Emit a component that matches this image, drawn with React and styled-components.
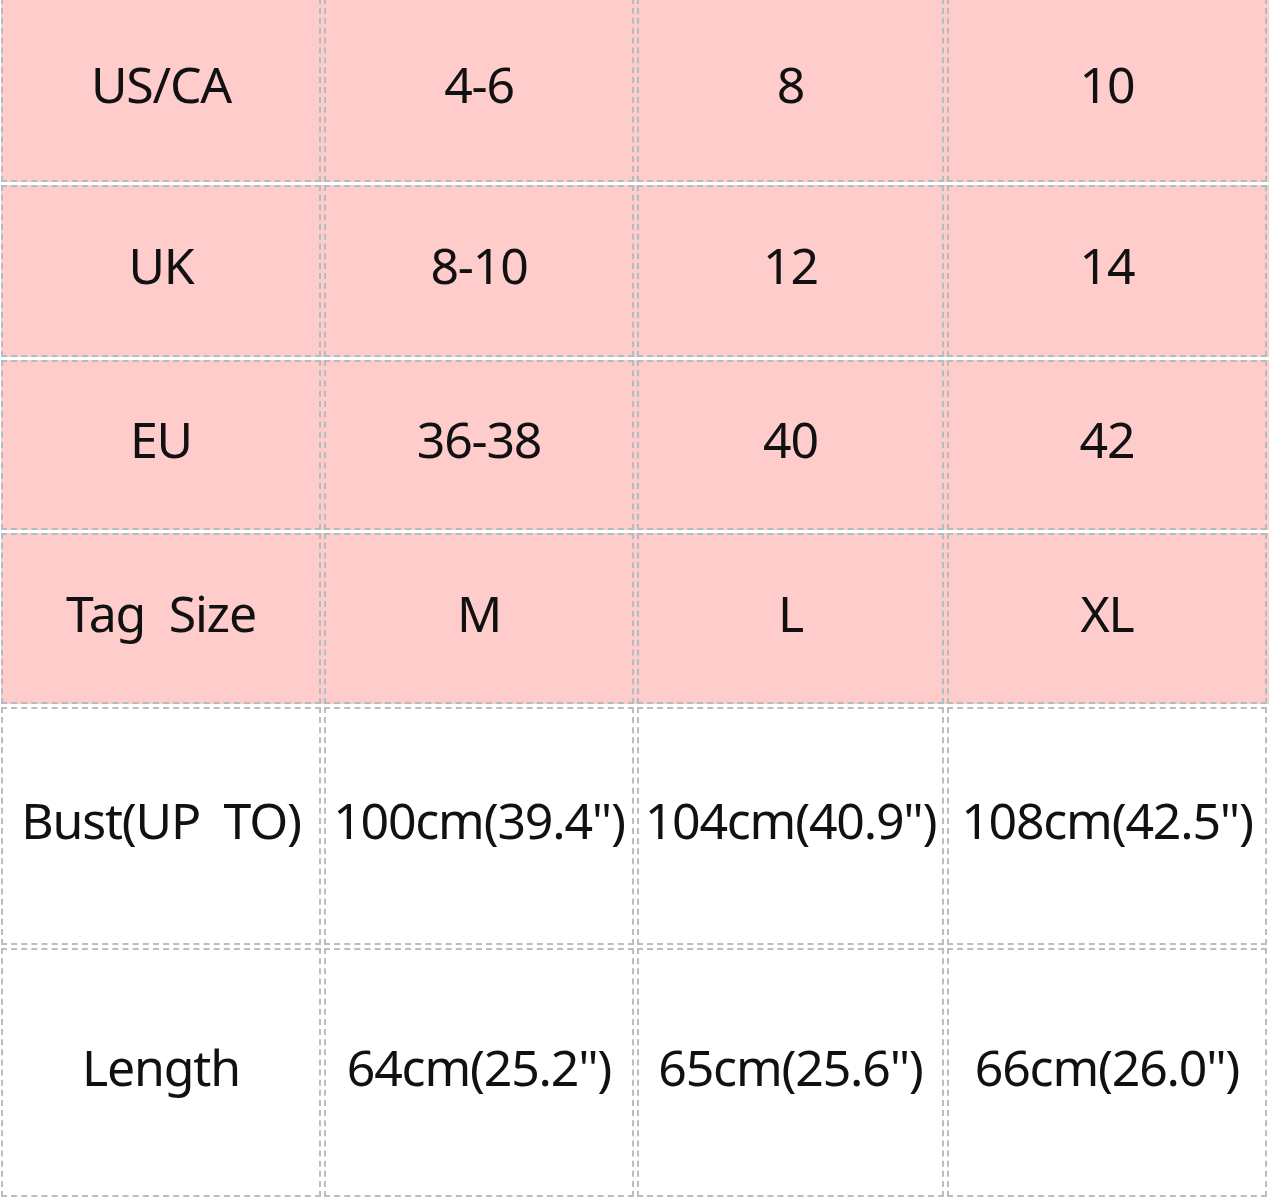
import React from "react";
import styled, { createGlobalStyle } from "styled-components";

const GlobalStyle = createGlobalStyle`
  html, body {
    margin: 0;
    padding: 0;
    background: #ffffff;
  }
  body {
    font-family: "Noto Sans", "Open Sans", sans-serif;
    overflow: hidden;
  }
`;

const Table = styled.div`
  display: flex;
  flex-direction: column;
  gap: 3px;
  width: 1269px;
  margin-top: -2px;
  padding-left: 1px;
  box-sizing: border-box;
  background: #ffffff;
`;

const Row = styled.div`
  display: grid;
  grid-template-columns: 320px 310px 307px 320px;
  column-gap: 3px;
  height: ${(p) => p.$h}px;
  background: ${(p) => (p.$pink ? "#ffcccc" : "#ffffff")};
`;

const Cell = styled.div`
  display: flex;
  align-items: center;
  justify-content: center;
  box-sizing: border-box;
  border: 2px dashed ${(p) => (p.$pink ? "#b2bebe" : "#bdbdbd")};
  background: ${(p) => (p.$pink ? "#ffcccc" : "#ffffff")};
  color: #111111;
  font-size: 50px;
  letter-spacing: -1.2px;
  white-space: pre;
  padding-bottom: 12px;
`;

const rows = [
  { h: 184, pink: true, cells: ["US/CA", "4-6", "8", "10"] },
  { h: 172, pink: true, cells: ["UK", "8-10", "12", "14"] },
  { h: 170, pink: true, cells: ["EU", "36-38", "40", "42"] },
  { h: 171, pink: true, cells: ["Tag  Size", "M", "L", "XL"] },
  {
    h: 238,
    pink: false,
    cells: ["Bust(UP  TO)", '100cm(39.4")', '104cm(40.9")', '108cm(42.5")'],
  },
  {
    h: 249,
    pink: false,
    cells: ["Length", '64cm(25.2")', '65cm(25.6")', '66cm(26.0")'],
  },
];

export default function App() {
  return (
    <>
      <GlobalStyle />
      <Table>
        {rows.map((r, i) => (
          <Row key={i} $h={r.h} $pink={r.pink}>
            {r.cells.map((c, j) => (
              <Cell key={j} $pink={r.pink}>
                {c}
              </Cell>
            ))}
          </Row>
        ))}
      </Table>
    </>
  );
}
